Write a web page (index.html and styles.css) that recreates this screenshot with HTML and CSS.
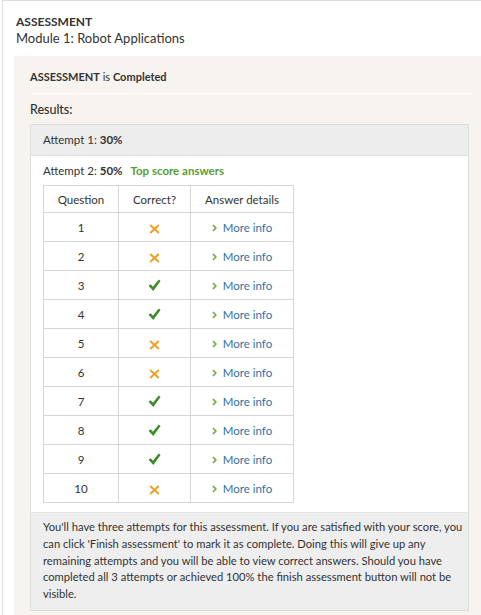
FILE: index.html
```html
<!DOCTYPE html>
<html lang="en">
<head>
    <meta charset="UTF-8">
    <meta name="viewport" content="width=device-width, initial-scale=1.0">
    <title>Module 1: Robot Applications</title>
    <link rel="stylesheet" href="styles.css">
</head>
<body>
    <svg class="sprites" xmlns="http://www.w3.org/2000/svg">
        <symbol id="ico-wrong" viewBox="0 0 11 10">
            <path d="M1.2 1 L9.8 9 M9.8 1 L1.2 9" fill="none" stroke="currentColor" stroke-width="2.1"/>
        </symbol>
        <symbol id="ico-right" viewBox="0 0 14 14">
            <path d="M0.6 7.4 L2.9 5.6 L5.3 8.4 L11.6 0.6 L13.5 2.1 L5.7 13 Z" fill="currentColor"/>
        </symbol>
        <symbol id="ico-more" viewBox="0 0 5 8">
            <path d="M1 1 L3.8 4 L1 7" fill="none" stroke="currentColor" stroke-width="1.8"/>
        </symbol>
    </svg>

    <div class="card">
        <div class="card-head">
            <div class="kicker">ASSESSMENT</div>
            <div class="title">Module 1: Robot Applications</div>
        </div>

        <div class="status">
            <p class="status-line"><b>ASSESSMENT</b> is <b>Completed</b></p>
            <h4 class="results-label">Results:</h4>

            <div class="attempts">
                <div class="attempt-head">Attempt 1: <b>30%</b></div>

                <div class="attempt-open">
                    <p class="attempt-line">Attempt 2: <b>50%</b> <span class="top-score">Top score answers</span></p>
                    <table class="answers">
                        <thead>
                            <tr>
                                <th>Question</th>
                                <th>Correct?</th>
                                <th>Answer details</th>
                            </tr>
                        </thead>
                        <tbody id="answerRows"></tbody>
                    </table>
                </div>

                <div class="note">
                    You'll have three attempts for this assessment. If you are satisfied with your score, you can click 'Finish assessment' to mark it as complete. Doing this will give up any remaining attempts and you will be able to view correct answers. Should you have completed all 3 attempts or achieved 100% the finish assessment button will not be visible.
                </div>
            </div>
        </div>
    </div>

    <script>
        // results of attempt 2, one entry per question
        const results = [false, false, true, true, false, false, true, true, true, false];

        const rows = results.map((ok, i) => {
            const icon = ok
                ? '<svg class="mark mark-right"><use href="#ico-right"/></svg>'
                : '<svg class="mark mark-wrong"><use href="#ico-wrong"/></svg>';
            return `<tr>
                <td>${i + 1}</td>
                <td>${icon}</td>
                <td><a class="more" href="#"><svg class="chev"><use href="#ico-more"/></svg>More info</a></td>
            </tr>`;
        });

        document.getElementById("answerRows").innerHTML = rows.join("");
    </script>
</body>
</html>
```

FILE: styles.css
```css
html, body {
    margin: 0;
    padding: 0;
    overflow: hidden;
}
body {
    font-family: Lato, "Liberation Sans", sans-serif;
    color: #333;
    background: #fff;
}
.sprites {
    display: none;
}
.card {
    margin-left: 2px;
    border-top: 1px solid #ddd;
    border-left: 1px solid #ddd;
    padding: 13px 0 0 11px;
    min-height: 100vh;
}
.card-head {
    padding: 0 0 9px 2px;
}
.kicker {
    font-size: 12px;
    font-weight: bold;
    line-height: 16px;
}
.title {
    font-size: 13px;
    line-height: 17px;
}
.status {
    width: 471px;
    box-sizing: border-box;
    background: #f7f4f0;
    padding: 14px 0 30px 16px;
}
.status-line {
    width: 442px;
    margin: 0;
    padding-bottom: 9px;
    border-bottom: 1px solid #fdfcfb;
    font-size: 11px;
    line-height: 14px;
}
.results-label {
    margin: 0;
    padding: 8px 0 6px;
    font-size: 12.5px;
    font-weight: normal;
    line-height: 16px;
    color: #2a2a2a;
    -webkit-text-stroke: 0.1px #2a2a2a;
}
.attempts {
    width: 439px;
    box-sizing: border-box;
    border: 1px solid #ddd;
    background: #fff;
}
.attempt-head {
    height: 30px;
    line-height: 30px;
    padding: 0 12px;
    background: #ededed;
    border-bottom: 1px solid #ddd;
    font-size: 11.5px;
}
.attempt-open {
    padding: 8px 12px 9px;
}
.attempt-line {
    margin: 0 0 7px;
    font-size: 11.5px;
    line-height: 14px;
}
.top-score {
    margin-left: 5px;
    color: #5a9b32;
    font-weight: bold;
}
.answers {
    border-collapse: collapse;
    font-size: 11.5px;
}
.answers th, .answers td {
    border: 1px solid #d6d6d6;
    text-align: center;
    padding: 0;
}
.answers th {
    height: 26px;
    font-weight: normal;
}
.answers td {
    height: 28px;
}
.answers th:nth-child(1) {
    width: 74px;
}
.answers th:nth-child(2) {
    width: 71px;
}
.answers th:nth-child(3) {
    width: 102px;
}
.mark {
    display: inline-block;
    vertical-align: middle;
}
.mark-wrong {
    width: 11px;
    height: 10px;
    color: #f0a02a;
}
.mark-right {
    width: 13px;
    height: 13px;
    color: #3f8a2a;
}
.more {
    color: #336fa3;
    text-decoration: none;
}
.chev {
    width: 5px;
    height: 8px;
    margin-right: 6px;
    color: #76b043;
    vertical-align: 0;
}
.note {
    padding: 6px 0 7px 12px;
    background: #eeeeee;
    border-top: 1px solid #e4e4e4;
    font-size: 11.2px;
    line-height: 16.75px;
}
```
